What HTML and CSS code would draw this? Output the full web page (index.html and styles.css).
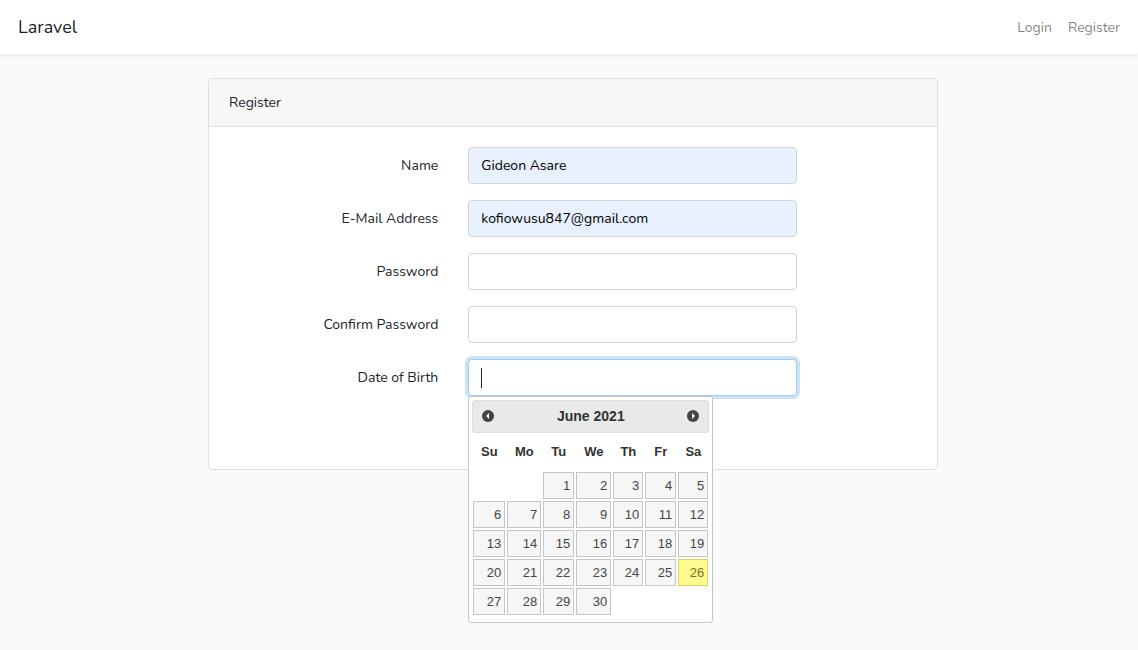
FILE: index.html
```html
<!DOCTYPE html>
<html lang="en">
<head>
<meta charset="utf-8">
<meta name="viewport" content="width=device-width, initial-scale=1">
<title>Laravel</title>
<link rel="stylesheet" href="styles.css">
</head>
<body>
<nav class="navbar">
  <a class="brand" href="#">Laravel</a>
  <div class="nav-links">
    <a href="#">Login</a>
    <a href="#">Register</a>
  </div>
</nav>
<main class="main">
  <section class="card">
    <header class="card-header">Register</header>
    <form class="card-body" autocomplete="off">
      <div class="form-row">
        <label for="name">Name</label>
        <div class="field"><input class="filled" id="name" type="text" value="Gideon Asare"></div>
      </div>
      <div class="form-row">
        <label for="email">E-Mail Address</label>
        <div class="field"><input class="filled" id="email" type="email" value="kofiowusu847@gmail.com"></div>
      </div>
      <div class="form-row">
        <label for="password">Password</label>
        <div class="field"><input id="password" type="password"></div>
      </div>
      <div class="form-row">
        <label for="confirm">Confirm Password</label>
        <div class="field"><input id="confirm" type="password"></div>
      </div>
      <div class="form-row">
        <label for="dob">Date of Birth</label>
        <div class="field">
          <input class="active" id="dob" type="text">
          <span class="caret"></span>
          <div class="datepicker">
            <div class="dp-header">
              <button type="button" aria-label="Previous month"><svg viewBox="0 0 12 12"><circle cx="6" cy="6" r="6"/><path d="M7 3v6L4 6z"/></svg></button>
              <span class="dp-title">June 2021</span>
              <button type="button" aria-label="Next month"><svg viewBox="0 0 12 12"><circle cx="6" cy="6" r="6"/><path d="M5 3v6l3-3z"/></svg></button>
            </div>
            <table class="dp-table">
              <colgroup><col class="c34"><col class="c36"><col class="c33"><col class="c37"><col class="c32"><col class="c33"><col class="c32"></colgroup>
              <thead><tr><th>Su</th><th>Mo</th><th>Tu</th><th>We</th><th>Th</th><th>Fr</th><th>Sa</th></tr></thead>
              <tbody>
                <tr><td></td><td></td><td><a href="#">1</a></td><td><a href="#">2</a></td><td><a href="#">3</a></td><td><a href="#">4</a></td><td><a href="#">5</a></td></tr>
                <tr><td><a href="#">6</a></td><td><a href="#">7</a></td><td><a href="#">8</a></td><td><a href="#">9</a></td><td><a href="#">10</a></td><td><a href="#">11</a></td><td><a href="#">12</a></td></tr>
                <tr><td><a href="#">13</a></td><td><a href="#">14</a></td><td><a href="#">15</a></td><td><a href="#">16</a></td><td><a href="#">17</a></td><td><a href="#">18</a></td><td><a href="#">19</a></td></tr>
                <tr><td><a href="#">20</a></td><td><a href="#">21</a></td><td><a href="#">22</a></td><td><a href="#">23</a></td><td><a href="#">24</a></td><td><a href="#">25</a></td><td><a class="today" href="#">26</a></td></tr>
                <tr><td><a href="#">27</a></td><td><a href="#">28</a></td><td><a href="#">29</a></td><td><a href="#">30</a></td><td></td><td></td><td></td></tr>
              </tbody>
            </table>
          </div>
        </div>
      </div>
    </form>
  </section>
</main>
</body>
</html>
```
FILE: styles.css
```css
* { box-sizing: border-box; }

body {
  margin: 0;
  min-height: 100vh;
  background: #f8fafc;
  color: #212529;
  font-family: Nunito, Lato, sans-serif;
  font-size: 14px;
  line-height: 23px;
}

a { text-decoration: none; }

.navbar {
  display: flex;
  align-items: center;
  justify-content: space-between;
  height: 54px;
  padding: 0 18px;
  background: #fff;
  box-shadow: 0 2px 4px rgba(0, 0, 0, .075);
}

.brand { color: rgba(0, 0, 0, .9); font-size: 18px; }
.nav-links { display: flex; gap: 16px; }
.nav-links a { color: rgba(0, 0, 0, .5); }

.main { padding: 24px 16px 24px 24px; }

.card {
  max-width: 730px;
  margin: 0 auto;
  background: #fff;
  border: 1px solid #dfdfdf;
  border-radius: 4px;
}

.card-header {
  padding: 12px 20px;
  background: #f7f7f7;
  border-bottom: 1px solid #dfdfdf;
  border-radius: 3px 3px 0 0;
}

.card-body {
  display: flex;
  flex-direction: column;
  gap: 16px;
  padding: 20px 5px 73px;
}

.form-row {
  display: grid;
  grid-template-columns: 4fr 6fr 2fr;
}

.form-row label {
  padding: 7px 15px;
  text-align: right;
}

.field { position: relative; padding: 0 15px; }

.field input {
  display: block;
  width: 100%;
  height: 37px;
  padding: 6px 12px;
  background: #fff;
  border: 1px solid #ced4da;
  border-radius: 4px;
  color: #212529;
  font: inherit;
  outline: 0;
}

.field .filled { background: #e8f0fe; color: #000; }
.field .active { border-color: #a1cbef; box-shadow: 0 0 0 3px #cbe3f6; }

.caret {
  position: absolute;
  top: 9px;
  left: 28px;
  width: 1px;
  height: 20px;
  background: #212529;
}

.datepicker {
  position: absolute;
  top: 37px;
  left: 15px;
  z-index: 1;
  width: 245px;
  padding: 3px 3px 6px;
  background: #fff;
  border: 1px solid #c5c5c5;
  border-radius: 3px;
  color: #333;
  font-family: "Liberation Sans", Arial, sans-serif;
}

.dp-header {
  display: flex;
  align-items: center;
  justify-content: space-between;
  height: 33px;
  padding: 0 9px;
  background: #e9e9e9;
  border: 1px solid #ddd;
  border-radius: 3px;
}

.dp-title { font-size: 14px; font-weight: bold; }

.dp-header button {
  display: flex;
  align-items: flex-start;
  width: 12px;
  height: 13px;
  padding: 0;
  background: none;
  border: 0;
}

.dp-header svg { display: block; width: 12px; height: 12px; }
.dp-header circle { fill: #444; }
.dp-header path { fill: #fff; }

.dp-table {
  width: 100%;
  table-layout: fixed;
  border-collapse: collapse;
  font-size: 13px;
  line-height: 19px;
}

.c32 { width: 32px; }
.c33 { width: 33px; }
.c34 { width: 34px; }
.c36 { width: 36px; }
.c37 { width: 37px; }

.dp-table th { height: 38px; padding: 0 0 2px; }
.dp-table td { height: 29px; padding: 1px; }

.dp-table td a {
  display: block;
  padding: 3px;
  background: #f6f6f6;
  border: 1px solid #c5c5c5;
  color: #454545;
  text-align: right;
}

.dp-table td .today {
  background: #fffa90;
  border-color: #dad55e;
  color: #777620;
}
```
